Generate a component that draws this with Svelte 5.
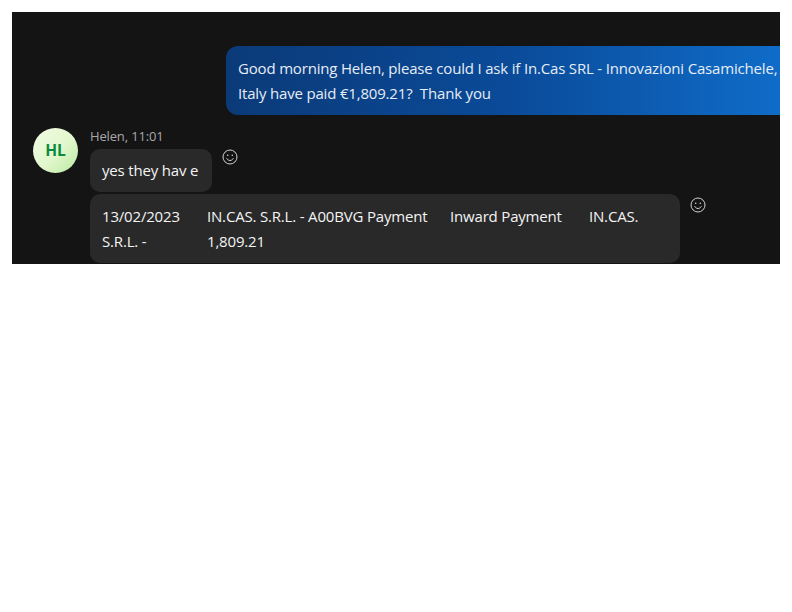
<script>
	const cols = ['13/02/2023', 'IN.CAS. S.R.L. - A00BVG Payment', 'Inward Payment', 'IN.CAS.', 'S.R.L. -', '1,809.21'];
</script>

{#snippet smiley()}
	<svg class="smiley" viewBox="0 0 16 16" width="16" height="16" fill="none" stroke="#d0d0d0" stroke-width="1">
		<circle cx="8" cy="8" r="7" />
		<circle cx="5.7" cy="6.3" r="0.8" fill="#d0d0d0" stroke="none" />
		<circle cx="10.3" cy="6.3" r="0.8" fill="#d0d0d0" stroke="none" />
		<path d="M4.8 9.6c.7 1.2 1.9 1.9 3.2 1.9s2.5-.7 3.2-1.9" stroke-linecap="round" />
	</svg>
{/snippet}

<div class="chat">
	<div class="outgoing">
		<div class="bubble-out">
			Good morning Helen, please could I ask if In.Cas SRL - Innovazioni Casamichele,<br />
			Italy have paid €1,809.21?&nbsp; Thank you
		</div>
	</div>

	<div class="incoming">
		<div class="avatar">HL</div>
		<div class="messages">
			<div class="meta">Helen, 11:01</div>
			<div class="msg-row first">
				<div class="bubble short">yes they hav e</div>
				{@render smiley()}
			</div>
			<div class="msg-row second">
				<div class="bubble table">
					{#each cols as text}
						<span>{text}</span>
					{/each}
				</div>
				{@render smiley()}
			</div>
		</div>
	</div>
</div>

<style>
	:global(body) {
		background: #fff;
	}
	.chat {
		box-sizing: border-box;
		width: 768px;
		height: 252px;
		margin: 12px;
		padding-top: 34px;
		overflow: hidden;
		background: #141414;
		color: #fff;
		font-family: 'Open Sans', 'Noto Sans', sans-serif;
		font-size: 15px;
		letter-spacing: -0.18px;
		line-height: 25px;
	}
	.outgoing {
		display: flex;
		justify-content: flex-end;
	}
	.bubble-out {
		box-sizing: border-box;
		width: 554px;
		height: 69px;
		padding: 10px 0 0 12px;
		border-radius: 12px 0 0 12px;
		background: linear-gradient(90deg, #0b3a78 0%, #0a4a98 50%, #0f6cc8 100%);
		color: #e6edf6;
		white-space: nowrap;
	}
	.incoming {
		display: flex;
		gap: 12px;
		margin-top: 13px;
		padding-left: 21px;
	}
	.avatar {
		display: flex;
		align-items: center;
		justify-content: center;
		width: 45px;
		height: 45px;
		border-radius: 50%;
		background: linear-gradient(135deg, #f2fbe6 0%, #e2f7cc 55%, #b8eaa0 100%);
		color: #0a8a3e;
		font-weight: 700;
		font-size: 15.5px;
		letter-spacing: 0;
	}
	.meta {
		height: 21px;
		color: #a8a8a8;
		font-size: 13px;
		letter-spacing: -0.15px;
		line-height: 17px;
	}
	.msg-row {
		display: flex;
		align-items: flex-start;
		gap: 10px;
	}
	.msg-row.second {
		margin-top: 2px;
	}
	.msg-row.second .smiley {
		margin-top: 3px;
	}
	.bubble {
		box-sizing: border-box;
		padding: 10px 13px 8px 12px;
		border-radius: 10px;
		background: #292929;
		color: #f4f4f4;
	}
	.short {
		padding-top: 9px;
		padding-bottom: 9px;
		padding-right: 13.5px;
	}
	.table {
		display: grid;
		grid-template-columns: 105px 243px 139px 1fr;
		grid-auto-rows: 25px;
		width: 590px;
		height: 69px;
	}
	.smiley {
		flex: none;
	}
</style>
